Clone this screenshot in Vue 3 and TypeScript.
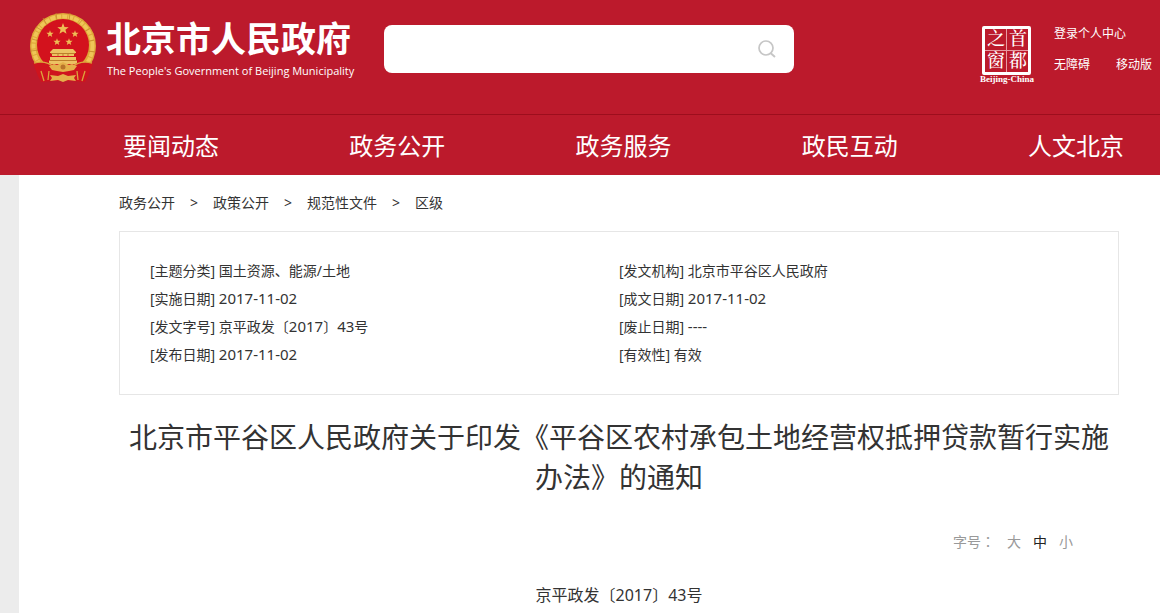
<script setup lang="ts">
import { ref } from 'vue'

interface Field {
  label: string
  value: string
}

const keyword = ref('')
const textSize = ref('中')
const sizes: string[] = ['大', '中', '小']
const navItems: string[] = ['要闻动态', '政务公开', '政务服务', '政民互动', '人文北京']
const crumbs: string[] = ['政务公开', '政策公开', '规范性文件', '区级']
const sealChars: string[] = ['之', '首', '窗', '都']
const fields: Field[] = [
  { label: '主题分类', value: '国土资源、能源/土地' },
  { label: '发文机构', value: '北京市平谷区人民政府' },
  { label: '实施日期', value: '2017-11-02' },
  { label: '成文日期', value: '2017-11-02' },
  { label: '发文字号', value: '京平政发〔2017〕43号' },
  { label: '废止日期', value: '----' },
  { label: '发布日期', value: '2017-11-02' },
  { label: '有效性', value: '有效' },
]

// Separates runs of digits and hyphens from Chinese text.
const runs = (text: string): string[] => text.split(/([0-9-]+)/).filter(Boolean)
const isNumeric = (run: string): boolean => /^[0-9-]+$/.test(run)

const star = (cx: number, cy: number, r: number): string =>
  Array.from({ length: 10 }, (_, i) => {
    const radius = i % 2 ? r * 0.42 : r
    const a = (Math.PI / 5) * i - Math.PI / 2
    return `${(cx + radius * Math.cos(a)).toFixed(2)},${(cy + radius * Math.sin(a)).toFixed(2)}`
  }).join(' ')
const stars: string[] = [star(34, 17, 6), star(21, 22, 3.8), star(46, 22, 3.8), star(28, 30, 3.8), star(40, 30, 3.8)]
</script>

<template>
  <div class="page">
    <header class="header">
      <div class="top">
        <a class="brand" href="#">
          <svg class="emblem" viewBox="0 0 68 72" aria-hidden="true">
            <circle cx="34" cy="34" r="33" fill="#dfa838" />
            <circle cx="34" cy="34" r="29.5" fill="none" stroke="#efc657" stroke-width="4" stroke-dasharray="5 1" />
            <path d="M7 15l7 4M3 27l7 2M2 39l8-1M14 6l4 7M27 1l1 8M41 1l-1 8M54 7l-5 6M62 16l-7 4M65 28l-8 2M66 40l-8-1" stroke="#c48a2c" stroke-width="0.8" />
            <circle cx="34" cy="33" r="26" fill="#d3121d" />
            <polygon v-for="points in stars" :key="points" :points="points" fill="#eebd55" />
            <path d="M24 37h20l3 3v1H21v-1zM23 41h22v3H23zM21 45h26v3H21zM20 48h28v4H20z" fill="#ecc262" />
            <path d="M22 41.5h24M20 48.5h28M28 43h2M33 43h2M38 43h2" stroke="#bd7d2b" stroke-width="1" />
            <path d="M4 51Q16 48 26 54L24 69L12 70L9 64ZM64 51Q52 48 42 54L44 69L56 70L59 64Z" fill="#cf141e" />
            <path d="M5 51q12-3 20 4M63 51q-12-3-20 4M12 59l3 10M56 59l-3 10M20 59l-1 9M48 59l1 9" fill="none" stroke="#dca33c" stroke-width="1.3" />
            <path d="M24 58h20l2 11H22z" fill="#cf141e" />
            <path d="M20 54l5-2 3 1 6-3 6 3 3-1 5 2-3 4-5 1-6 1-6-1-5-1z" fill="#e5b04a" />
            <circle cx="34" cy="55" r="2.5" fill="#b9742a" />
            <path d="M21 63l8 1 5-2 5 2 8-1-2 3 2 3-8-1-5 2-5-2-8 1 2-3z" fill="#e5b04a" />
          </svg>
          <span class="names">
            <strong class="name">北京市人民政府</strong>
            <span class="english">The People's Government of Beijing Municipality</span>
          </span>
        </a>
        <form class="search" role="search" @submit.prevent>
          <input v-model="keyword" class="search-input" type="text" aria-label="搜索" />
          <button class="search-button" type="submit" aria-label="搜索">
            <svg viewBox="0 0 18 18" width="18" height="18" aria-hidden="true">
              <circle cx="8" cy="8" r="7" fill="none" stroke="#c6c6c6" stroke-width="1.7" />
              <path d="M12.5 13l4.5 4" stroke="#c6c6c6" stroke-width="1.9" />
            </svg>
          </button>
        </form>
        <div class="tools">
          <a class="seal" href="#">
            <span class="seal-grid">
              <span v-for="char in sealChars" :key="char" class="seal-char">{{ char }}</span>
            </span>
            <span class="seal-caption">Beijing-China</span>
          </a>
          <div class="links">
            <a href="#">登录个人中心</a>
            <div class="link-row">
              <a href="#">无障碍</a>
              <a href="#">移动版</a>
            </div>
          </div>
        </div>
      </div>
      <nav class="nav">
        <a v-for="item in navItems" :key="item" href="#">{{ item }}</a>
      </nav>
    </header>

    <main class="main">
      <nav class="crumbs" aria-label="当前位置">
        <template v-for="(crumb, i) in crumbs" :key="crumb">
          <span v-if="i > 0">&gt;</span>
          <a href="#">{{ crumb }}</a>
        </template>
      </nav>

      <section class="info">
        <p v-for="field in fields" :key="field.label">
          [{{ field.label }}]
          <span v-for="(run, i) in runs(field.value)" :key="i" :class="{ numeric: isNumeric(run) }">{{ run }}</span>
        </p>
      </section>

      <h1 class="title">北京市平谷区人民政府关于印发《平谷区农村承包土地经营权抵押贷款暂行实施办法》的通知</h1>

      <div class="sizes">
        <span class="sizes-label">字号：</span>
        <button
          v-for="size in sizes"
          :key="size"
          type="button"
          :class="{ active: size === textSize }"
          @click="textSize = size"
        >{{ size }}</button>
      </div>

      <p class="number">京平政发〔2017〕43号</p>
    </main>
  </div>
</template>

<style>
body {
  margin: 0;
  background: #fff;
}
</style>

<style scoped>
.page {
  display: flex;
  flex-direction: column;
  min-height: 100vh;
  color: #333;
  font-family: 'Noto Sans', 'Noto Sans CJK SC', sans-serif;
  font-size: 14px;
}
a {
  color: inherit;
  text-decoration: none;
}
p {
  margin: 0;
}
button {
  padding: 0;
  border: 0;
  background: none;
  color: inherit;
  font: inherit;
  cursor: pointer;
}
.header {
  background: #bc1a2c;
  color: #fff;
}
.top {
  display: flex;
  align-items: flex-start;
  box-sizing: border-box;
  min-height: 114px;
  padding: 12px 8px 0 29px;
}
.brand {
  display: flex;
  flex: none;
  gap: 9px;
  width: 355px;
}
.emblem {
  width: 68px;
  height: 72px;
}
.names {
  display: flex;
  flex-direction: column;
  padding-top: 6px;
  white-space: nowrap;
}
.name {
  font-size: 35px;
  line-height: 42px;
}
.english {
  padding-left: 1px;
  font-family: 'Open Sans', 'Noto Sans', sans-serif;
  font-size: 11px;
  line-height: 22px;
}
.search {
  display: flex;
  flex: 0 1 410px;
  height: 48px;
  margin-top: 13px;
  border-radius: 8px;
  background: #fff;
}
.search-input {
  flex: 1;
  min-width: 0;
  padding: 0 16px;
  border: 0;
  outline: 0;
  background: none;
  font: inherit;
  font-size: 16px;
}
.search-button {
  display: flex;
  align-items: center;
  justify-content: center;
  width: 54px;
}
.tools {
  display: flex;
  gap: 20px;
  margin-left: auto;
  padding-top: 12px;
}
.seal {
  display: flex;
  flex-direction: column;
  align-items: center;
  width: 54px;
}
.seal-grid {
  display: grid;
  grid-template-columns: 1fr 1fr;
  gap: 1px;
  width: 43px;
  margin-top: 2px;
  border: 3px solid #fff;
  border-radius: 2px;
  background: #e79ba2;
}
.seal-char {
  background: #bc1a2c;
  font-family: 'Liberation Serif', 'Noto Serif CJK SC', 'Noto Sans CJK SC', serif;
  font-size: 18px;
  font-weight: 500;
  line-height: 21px;
  text-align: center;
}
.seal-caption {
  font-family: 'Liberation Serif', serif;
  font-size: 9px;
  font-weight: bold;
  line-height: 9px;
  white-space: nowrap;
}
.links {
  display: flex;
  flex-direction: column;
  gap: 11px;
  font-size: 12px;
  line-height: 20px;
  white-space: nowrap;
}
.link-row {
  display: flex;
  gap: 26px;
}
.nav {
  display: flex;
  justify-content: space-between;
  padding: 2px 36px 0 123px;
  border-top: 1px solid #9d0e1d;
  font-size: 24px;
  line-height: 58px;
}
.main {
  flex: 1;
  padding: 0 41px 0 100px;
  border-left: 19px solid #ececec;
}
.crumbs {
  display: flex;
  gap: 15px;
  padding: 18px 0;
  line-height: 20px;
}
.info {
  display: grid;
  grid-template-columns: 1fr 1fr;
  padding: 25px 30px;
  border: 1px solid #e6e6e6;
  line-height: 28px;
}
.numeric {
  font-size: 15px;
  line-height: 20px;
}
.title {
  margin: 22px 0 0;
  font-size: 28px;
  font-weight: 400;
  line-height: 40px;
  text-align: center;
}
.sizes {
  display: flex;
  justify-content: flex-end;
  gap: 12px;
  padding: 35px 46px 0 0;
  color: #999;
  line-height: 20px;
}
.sizes-label {
  font-family: 'Noto Sans', 'Noto Sans CJK TC', sans-serif;
}
.active {
  color: #222;
}
.number {
  padding: 31px 0 6px;
  font-size: 16px;
  line-height: 24px;
  text-align: center;
}
</style>
